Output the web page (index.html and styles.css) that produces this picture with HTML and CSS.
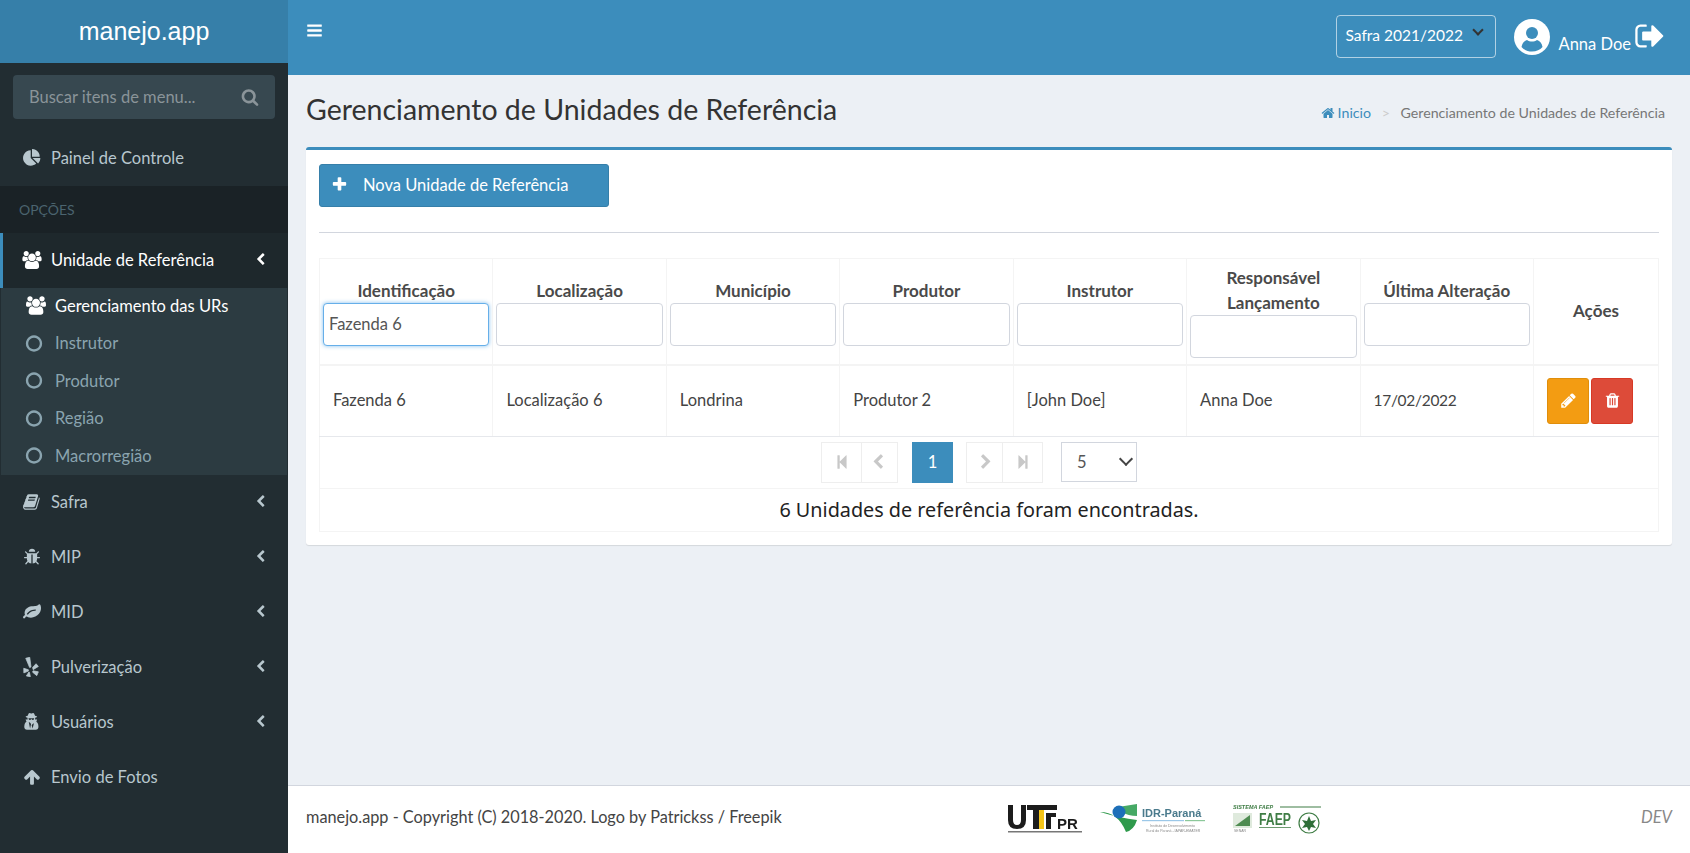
FILE: index.html
```html
<!DOCTYPE html>
<html>
<head>
    <meta charset="UTF-8">
    <title>manejo.app</title>
    <link rel="stylesheet" href="styles.css">
</head>
<body>
    <svg class="sprite" xmlns="http://www.w3.org/2000/svg">
        <symbol id="i-search" viewBox="0 0 1792 1792"><path d="M1216 832q0-185-131.5-316.5t-316.5-131.5-316.5 131.5-131.5 316.5 131.5 316.5 316.5 131.5 316.5-131.5 131.5-316.5zm512 832q0 52-38 90t-90 38q-54 0-90-38l-343-342q-179 124-399 124-143 0-273.5-55.5t-225-150-150-225-55.5-273.5 55.5-273.5 150-225 225-150 273.5-55.5 273.5 55.5 225 150 150 225 55.5 273.5q0 220-124 399l343 343q37 37 37 90z"/></symbol>
        <symbol id="i-pie" viewBox="0 0 1792 1792"><path d="M768 890l546 546q-106 108-247.5 168t-298.5 60q-209 0-385.5-103t-279.5-279.5-103-385.5 103-385.5 279.5-279.5 385.5-103v768zm187 6h773q0 157-60 298.5t-168 247.5zm709-128h-768v-768q209 0 385.5 103t279.5 279.5 103 385.5z"/></symbol>
        <symbol id="i-users" viewBox="0 0 1920 1792"><path d="M593 896q-162 5-265 128h-134q-82 0-138-40.5t-56-118.5q0-353 124-353 6 0 43.5 21t97.5 42.5 119 21.5q67 0 133-23-5 37-5 66 0 139 81 256zm1071 637q0 120-73 189.5t-194 69.5h-874q-121 0-194-69.5t-73-189.5q0-53 3.5-103.5t14-109 26.5-108.5 43-97.5 62-81 85.5-53.5 111.5-20q10 0 43 21.5t73 48 107 48 135 21.5 135-21.5 107-48 73-48 43-21.5q61 0 111.5 20t85.5 53.5 62 81 43 97.5 26.5 108.5 14 109 3.5 103.5zm-1024-1277q0 106-75 181t-181 75-181-75-75-181 75-181 181-75 181 75 75 181zm704 384q0 159-112.5 271.5t-271.5 112.5-271.5-112.5-112.5-271.5 112.5-271.5 271.5-112.5 271.5 112.5 112.5 271.5zm576 225q0 78-56 118.5t-138 40.5h-134q-103-123-265-128 81-117 81-256 0-29-5-66 66 23 133 23 59 0 119-21.5t97.5-42.5 43.5-21q124 0 124 353zm-128-609q0 106-75 181t-181 75-181-75-75-181 75-181 181-75 181 75 75 181z"/></symbol>
        <symbol id="i-chev-left" viewBox="0 0 1792 1792"><path d="M1427 301l-531 531 531 531q19 19 19 45t-19 45l-166 166q-19 19-45 19t-45-19l-742-742q-19-19-19-45t19-45l742-742q19-19 45-19t45 19l166 166q19 19 19 45t-19 45z"/></symbol>
        <symbol id="i-chev-right" viewBox="0 0 1792 1792"><path d="M1363 877l-742 742q-19 19-45 19t-45-19l-166-166q-19-19-19-45t19-45l531-531-531-531q-19-19-19-45t19-45l166-166q19-19 45-19t45 19l742 742q19 19 19 45t-19 45z"/></symbol>
        <symbol id="i-circle" viewBox="0 0 1792 1792"><path d="M896 352q-148 0-273 73t-198 198-73 273 73 273 198 198 273 73 273-73 198-198 73-273-73-273-198-198-273-73zm768 544q0 209-103 385.5t-279.5 279.5-385.5 103-385.5-103-279.5-279.5-103-385.5 103-385.5 279.5-279.5 385.5-103 385.5 103 279.5 279.5 103 385.5z"/></symbol>
        <symbol id="i-book" viewBox="0 0 1792 1792"><path d="M1639 478q40 57 18 129l-275 906q-19 64-76.5 107.5t-122.5 43.5h-923q-77 0-148.5-53.5t-99.5-131.5q-24-67-2-127 0-4 3-27t4-37q1-8-3-21.5t-3-19.5q2-11 8-21t16.5-23.5 16.5-23.5q23-38 45-91.5t30-91.5q3-10 .5-30t-.5-28q3-11 17-28t17-23q21-36 42-92t25-90q1-9-2.5-32t.5-28q4-13 22-30.5t22-22.5q19-26 42.5-84.5t27.5-96.5q1-8-3-25.5t-2-26.5q2-8 9-18t18-23 17-21q8-12 16.5-30.5t15-35 16-36 19.5-32 26.5-23.5 36-11.5 47.5 5.5l-1 3q38-9 51-9h761q74 0 114 56t18 130l-274 906q-36 119-71.5 153.5t-128.5 34.5h-869q-27 0-38 15-11 16-1 43 24 70 144 70h923q29 0 56-15.5t35-41.5l300-987q7-22 5-57 38 15 59 43zm-1064 2q-4 13 2 22.5t20 9.5h608q13 0 25.5-9.5t16.5-22.5l21-64q4-13-2-22.5t-20-9.5h-608q-13 0-25.5 9.5t-16.5 22.5zm-83 256q-4 13 2 22.5t20 9.5h608q13 0 25.5-9.5t16.5-22.5l21-64q4-13-2-22.5t-20-9.5h-608q-13 0-25.5 9.5t-16.5 22.5z"/></symbol>
        <symbol id="i-bug" viewBox="0 0 1792 1792"><path d="M1696 960q0 26-19 45t-45 19h-224q0 171-67 290l208 209q19 19 19 45t-19 45q-18 19-45 19t-45-19l-198-197q-5 5-15 13t-42 28.5-65 36.5-82 29-97 13v-896h-128v896q-51 0-101.5-13.5t-87-33-66-39-43.5-32.5l-15-14-183 207q-20 21-48 21-24 0-43-16-19-18-20.5-44.5t15.5-46.5l202-227q-58-114-58-274h-224q-26 0-45-19t-19-45 19-45 45-19h224v-294l-173-173q-19-19-19-45t19-45 45-19 45 19l173 173h844l173-173q19-19 45-19t45 19 19 45-19 45l-173 173v294h224q26 0 45 19t19 45zm-480-576h-640q0-133 93.5-226.5t226.5-93.5 226.5 93.5 93.5 226.5z"/></symbol>
        <symbol id="i-leaf" viewBox="0 0 1792 1792"><path d="M1280 704q0-26-19-45t-45-19q-172 0-318 49.5t-259.5 134-235.5 219.5q-19 21-19 45 0 26 19 45t45 19q24 0 45-19 27-24 74-71t67-66q137-124 268.5-176t313.5-52q26 0 45-19t19-45zm512-198q0 95-20 193-46 224-184.5 383t-357.5 268q-214 108-438 108-148 0-286-47-15-5-88-42t-96-37q-16 0-39.5 32t-45 70-52.5 70-60 32q-43 0-63.5-17.5t-45.5-59.5q-2-4-6-11t-5.5-10-3-9.5-1.500-13.500q0-35 31-73.500t68-65.500 68-56 31-48q0-4-14-38t-16-44q-9-51-9-104 0-115 43.500-220t119-184.500 170.500-139 204-95.500q55-18 145-25.500t179.500-9 178.500-6 163.500-24 113.500-56.500l29.500-29.500 29.500-28 27-20 36.500-16 43.500-4.500q39 0 70.500 46t47.500 112 24 124 8 96z"/></symbol>
        <symbol id="i-yelp" viewBox="0 0 15 19"><path stroke="currentColor" stroke-width=".7" stroke-linejoin="round" d="M2.500 1.200L6.300.3 7.500 9.500 6.200 10zM.6 10.700L5 12.100v1.300L.7 15.100zM9 9.900l3.300-3.500 2.200 2.600-5 3zM9.500 13.100l5 1-1.500 3.600-4-3.300zM6 14.500l.9 4.200-3.800-.7 2.400-3.800z"/></symbol>
        <symbol id="i-secret" viewBox="0 0 1536 1792"><path d="M576 1536l96-448-96-128-128-64zm256 0l128-512-128 64-96 128zm160-1010q-2-4-4-6-10-8-96-8-70 0-167 19-7 2-21 2t-21-2q-97-19-167-19-86 0-96 8-2 2-4 6 2 18 4 27 2 3 7.500 6.500t7.500 10.500q2 4 7.500 20.500t7 20.500 7.500 17 8.500 17 9 14 12 13.500 14 9.500 17.500 8 20.500 4 24.500 2q36 0 59-12.500t32.500-30 14.500-34.500 11.500-29.500 17.500-12.500h12q11 0 17.500 12.500t11.500 29.500 14.500 34.500 32.500 30 59 12.500q13 0 24.500-2t20.500-4 17.500-8 14-9.500 12-13.500 9-14 8.500-17 7.500-17 7-20.500 7.500-20.500q2-7 7.500-10.500t7.500-6.500q2-9 4-27zm416 879q0 121-73 190t-194 69h-874q-121 0-194-69t-73-190q0-61 4.500-118t19-125.500 37.500-123.500 63.500-103.500 93.500-74.500l-90-220h214q-22-64-22-128 0-12 2-32-194-40-194-96 0-57 210-99 17-62 51.500-134t70.500-114q32-37 76-37 30 0 84 31t84 31 84-31 84-31q44 0 76 36 36 42 70.500 114t51.500 134q210 42 210 99 0 56-194 96 7 81-20 160h214l-82 225q63 33 107.500 96.500t65.500 143.500 29 151.500 8 148.500z"/></symbol>
        <symbol id="i-arrow-up" viewBox="0 0 1792 1792"><path d="M1675 971q0 51-37 90l-75 75q-38 38-91 38-54 0-90-38l-294-293v704q0 52-37.5 84.5t-90.5 32.5h-128q-53 0-90.5-32.5t-37.5-84.5v-704l-294 293q-36 38-90 38t-90-38l-75-75q-38-38-38-90 0-53 38-91l651-651q35-37 90-37 54 0 91 37l651 651q37 39 37 91z"/></symbol>
        <symbol id="i-bars" viewBox="0 0 1792 1792"><path d="M1664 1344v128q0 26-19 45t-45 19h-1408q-26 0-45-19t-19-45v-128q0-26 19-45t45-19h1408q26 0 45 19t19 45zm0-512v128q0 26-19 45t-45 19h-1408q-26 0-45-19t-19-45v-128q0-26 19-45t45-19h1408q26 0 45 19t19 45zm0-512v128q0 26-19 45t-45 19h-1408q-26 0-45-19t-19-45v-128q0-26 19-45t45-19h1408q26 0 45 19t19 45z"/></symbol>
        <symbol id="i-signout" viewBox="0 0 1664 1792"><path d="M704 1440q0 4 1 20t.5 26.5-3 23.5-10 19.5-20.5 6.5h-320q-119 0-203.5-84.5t-84.5-203.5v-704q0-119 84.5-203.5t203.5-84.5h320q13 0 22.5 9.5t9.5 22.5q0 4 1 20t.5 26.5-3 23.5-10 19.5-20.5 6.5h-320q-66 0-113 47t-47 113v704q0 66 47 113t113 47h312l11.5 1 11.5 3 8 5.5 7 9 2 13.5zm928-544q0 26-19 45l-544 544q-19 19-45 19t-45-19-19-45v-288h-448q-26 0-45-19t-19-45v-384q0-26 19-45t45-19h448v-288q0-26 19-45t45-19 45 19l544 544q19 19 19 45z"/></symbol>
        <symbol id="i-home" viewBox="0 0 1792 1792"><path d="M1472 992v480q0 26-19 45t-45 19h-384v-384h-256v384h-384q-26 0-45-19t-19-45v-480q0-1 .5-3t.5-3l575-474 575 474q1 2 1 6zm223-69l-62 74q-8 9-21 11h-3q-13 0-21-7l-692-577-692 577q-12 8-24 7-13-2-21-11l-62-74q-8-10-7-23.5t11-21.5l719-599q32-26 76-26t76 26l244 204v-195q0-14 9-23t23-9h192q14 0 23 9t9 23v408l219 182q10 8 11 21.5t-7 23.5z"/></symbol>
        <symbol id="i-plus" viewBox="0 0 1792 1792"><path d="M1600 736v192q0 40-28 68t-68 28h-416v416q0 40-28 68t-68 28h-192q-40 0-68-28t-28-68v-416h-416q-40 0-68-28t-28-68v-192q0-40 28-68t68-28h416v-416q0-40 28-68t68-28h192q40 0 68 28t28 68v416h416q40 0 68 28t28 68z"/></symbol>
        <symbol id="i-pencil" viewBox="0 0 1792 1792"><path d="M491 1536l91-91-235-235-91 91v107h128v128h107zm523-928q0-22-22-22-10 0-17 7l-542 542q-7 7-7 17 0 22 22 22 10 0 17-7l542-542q7-7 7-17zm-54-192l416 416-832 832h-416v-416zm683 96q0 53-37 90l-166 166-416-416 166-165q36-38 90-38 53 0 91 38l235 234q37 39 37 91z"/></symbol>
        <symbol id="i-trash" viewBox="0 0 1792 1792"><path d="M704 1376v-704q0-14-9-23t-23-9h-64q-14 0-23 9t-9 23v704q0 14 9 23t23 9h64q14 0 23-9t9-23zm256 0v-704q0-14-9-23t-23-9h-64q-14 0-23 9t-9 23v704q0 14 9 23t23 9h64q14 0 23-9t9-23zm256 0v-704q0-14-9-23t-23-9h-64q-14 0-23 9t-9 23v704q0 14 9 23t23 9h64q14 0 23-9t9-23zm-544-992h448l-48-117q-7-9-17-11h-317q-10 2-17 11zm928 32v64q0 14-9 23t-23 9h-96v948q0 83-47 143.5t-113 60.5h-832q-66 0-113-58.5t-47-141.5v-952h-96q-14 0-23-9t-9-23v-64q0-14 9-23t23-9h309l70-167q15-37 54-63t79-26h320q40 0 79 26t54 63l70 167h309q14 0 23 9t9 23z"/></symbol>
        <symbol id="i-first" viewBox="0 0 1792 1792"><path d="M1363 141q19-19 32-13t13 32v1472q0 26-13 32t-32-13l-710-710q-9-9-13-19v678q0 26-19 45t-45 19h-128q-26 0-45-19t-19-45v-1408q0-26 19-45t45-19h128q26 0 45 19t19 45v678q4-10 13-19z"/></symbol>
        <symbol id="i-last" viewBox="0 0 1792 1792"><path d="M429 1651q-19 19-32 13t-13-32v-1472q0-26 13-32t32 13l710 710q9 9 13 19v-678q0-26 19-45t45-19h128q26 0 45 19t19 45v1408q0 26-19 45t-45 19h-128q-26 0-45-19t-19-45v-678q-4 10-13 19z"/></symbol>
    </svg>

    <div class="layout">
        <aside class="sidebar">
            <div class="logo">manejo.app</div>
            <div class="search">
                <span>Buscar itens de menu...</span>
                <svg class="ico search-ico"><use href="#i-search"/></svg>
            </div>
            <a class="menu-item"><svg class="ico"><use href="#i-pie"/></svg>Painel de Controle</a>
            <div class="menu-header">OPÇÕES</div>
            <a class="menu-item active"><svg class="ico"><use href="#i-users"/></svg>Unidade de Referência<svg class="chev"><use href="#i-chev-left"/></svg></a>
            <div class="submenu">
                <a class="sub-item current"><svg class="ico"><use href="#i-users"/></svg>Gerenciamento das URs</a>
                <a class="sub-item"><svg class="ico dot"><use href="#i-circle"/></svg>Instrutor</a>
                <a class="sub-item"><svg class="ico dot"><use href="#i-circle"/></svg>Produtor</a>
                <a class="sub-item"><svg class="ico dot"><use href="#i-circle"/></svg>Região</a>
                <a class="sub-item"><svg class="ico dot"><use href="#i-circle"/></svg>Macrorregião</a>
            </div>
            <a class="menu-item"><svg class="ico"><use href="#i-book"/></svg>Safra<svg class="chev"><use href="#i-chev-left"/></svg></a>
            <a class="menu-item"><svg class="ico"><use href="#i-bug"/></svg>MIP<svg class="chev"><use href="#i-chev-left"/></svg></a>
            <a class="menu-item"><svg class="ico"><use href="#i-leaf"/></svg>MID<svg class="chev"><use href="#i-chev-left"/></svg></a>
            <a class="menu-item"><svg class="ico big"><use href="#i-yelp"/></svg>Pulverização<svg class="chev"><use href="#i-chev-left"/></svg></a>
            <a class="menu-item"><svg class="ico"><use href="#i-secret"/></svg>Usuários<svg class="chev"><use href="#i-chev-left"/></svg></a>
            <a class="menu-item"><svg class="ico"><use href="#i-arrow-up"/></svg>Envio de Fotos</a>
        </aside>

        <div class="page">
            <header class="topbar">
                <svg class="bars"><use href="#i-bars"/></svg>
                <div class="topbar-right">
                    <div class="safra">Safra 2021/2022<span class="safra-arrow"></span></div>
                    <svg class="avatar" viewBox="0 0 36 36">
                        <circle cx="18" cy="18" r="18" fill="#fff"/>
                        <circle cx="18" cy="14" r="6" fill="#3c8dbc"/>
                        <path d="M7.500 28c.5-3.500 2.500-6 5.500-7 3 2 7 2 10 0 3 1 5 3.500 5.500 7-2.500 2.800-6 4.500-10.500 4.500s-8-1.700-10.500-4.500z" fill="#3c8dbc"/>
                    </svg>
                    <span class="user-name">Anna Doe</span>
                    <svg class="signout"><use href="#i-signout"/></svg>
                </div>
            </header>

            <main class="content">
                <div class="content-head">
                    <h1>Gerenciamento de Unidades de Referência</h1>
                    <div class="breadcrumb">
                        <a><svg class="home"><use href="#i-home"/></svg>Inicio</a>
                        <span class="sep">&gt;</span>
                        <span>Gerenciamento de Unidades de Referência</span>
                    </div>
                </div>

                <section class="box">
                    <button class="btn-new"><svg class="plus"><use href="#i-plus"/></svg>Nova Unidade de Referência</button>
                    <hr>
                    <table class="grid">
                        <thead>
                            <tr>
                                <th>Identificação<input class="focus" type="text" value="Fazenda 6"></th>
                                <th>Localização<input type="text"></th>
                                <th>Município<input type="text"></th>
                                <th>Produtor<input type="text"></th>
                                <th>Instrutor<input type="text"></th>
                                <th>Responsável Lançamento<input type="text"></th>
                                <th>Última Alteração<input type="text"></th>
                                <th>Ações</th>
                            </tr>
                        </thead>
                        <tbody>
                            <tr>
                                <td>Fazenda 6</td>
                                <td>Localização 6</td>
                                <td>Londrina</td>
                                <td>Produtor 2</td>
                                <td>[John Doe]</td>
                                <td>Anna Doe</td>
                                <td class="date">17/02/2022</td>
                                <td class="actions">
                                    <button class="btn-act warn"><svg><use href="#i-pencil"/></svg></button>
                                    <button class="btn-act danger"><svg><use href="#i-trash"/></svg></button>
                                </td>
                            </tr>
                        </tbody>
                        <tfoot>
                            <tr>
                                <td colspan="8" class="pager-cell">
                                    <div class="pager">
                                        <span class="pg w40"><svg><use href="#i-first"/></svg></span>
                                        <span class="pg w37 prev"><svg><use href="#i-chev-left"/></svg></span>
                                        <span class="pg-current">1</span>
                                        <span class="pg w37 next"><svg><use href="#i-chev-right"/></svg></span>
                                        <span class="pg w40"><svg><use href="#i-last"/></svg></span>
                                        <span class="page-size">5</span>
                                    </div>
                                </td>
                            </tr>
                            <tr>
                                <td colspan="8" class="total">6 Unidades de referência foram encontradas.</td>
                            </tr>
                        </tfoot>
                    </table>
                </section>
            </main>

            <footer class="footer">
                <span class="copy">manejo.app - Copyright (C) 2018-2020. Logo by Patrickss / Freepik</span>
                <div class="partners">
                    <svg class="partner logo-utf" width="74" height="30" viewBox="0 0 74 30">
                        <path d="M0 1h5v15q0 5 4 5t4-5V1h5v15q0 9-9 9T0 16z" fill="#1c1c1c"/>
                        <path d="M19 1h30v5H31v19h-6V6h-6z" fill="#1c1c1c"/>
                        <path d="M31 6h5v19h-5z" fill="#f5c518"/>
                        <path d="M38 9h10v4h-5v12h-5z" fill="#1c1c1c"/>
                        <text class="partner-pr" x="49" y="25">PR</text>
                        <rect y="27" width="74" height="1.500" fill="#777"/>
                    </svg>
                    <svg class="partner logo-idr" width="105" height="30" viewBox="0 0 105 30">
                        <path d="M0 8q18 0 26 20 8-2 11-12Q20 14 0 8z" fill="#2f9a4c"/>
                        <path d="M18 3l19-3v12q-9 0-15-4z" fill="#46a965"/>
                        <circle cx="19" cy="8" r="6.500" fill="#1d6fb8"/>
                        <text class="partner-idr" x="42" y="13">IDR-Paraná</text>
                        <rect x="42" y="16" width="42" height="1.200" fill="#9cc8e8"/>
                        <rect x="85" y="16" width="20" height="1.200" fill="#8cc89a"/>
                        <text class="partner-tiny" x="50" y="23">Instituto de Desenvolvimento</text>
                        <text class="partner-tiny" x="46" y="28">Rural do Paraná - IAPAR-EMATER</text>
                    </svg>
                    <svg class="partner logo-faep" width="90" height="30" viewBox="0 0 90 30">
                        <text class="partner-sis" x="0" y="4.500">SISTEMA FAEP</text>
                        <rect x="47" y="2.500" width="41" height="1" fill="#3f7d45"/>
                        <rect x="0" y="9" width="19" height="15" fill="#dfeadd"/>
                        <path d="M2 22L17 11v11z" fill="#4f8c52"/>
                        <text class="partner-tiny" x="1" y="28">SENAR</text>
                        <text class="partner-faep" x="26" y="21" textLength="32" lengthAdjust="spacingAndGlyphs">FAEP</text>
                        <rect x="26" y="23" width="32" height="1" fill="#6c9a6f"/>
                        <circle cx="76" cy="19" r="10" fill="#fff" stroke="#3f7d45" stroke-width="1.200"/>
                        <path d="M76 12l2 5 5-1-3 4 3 4-5-1-2 4-2-4-5 1 3-4-3-4 5 1z" fill="#2f6f38"/>
                    </svg>
                </div>
                <span class="dev">DEV</span>
            </footer>
        </div>
    </div>
</body>
</html>
```

FILE: styles.css
```css
*{
    box-sizing:border-box;
}
html,body{
    margin:0;
    height:100%;
    overflow:hidden;
}
body{
    font-family:"Lato","Liberation Sans",sans-serif;
    font-size:16.5px;
    color:#333;
    background:#ecf0f5;
}
.sprite{
    display:none;
}
svg{
    fill:currentColor;
}
.layout{
    display:grid;
    grid-template-columns:288px 1fr;
    height:853px;
}

/* sidebar */
.sidebar{
    background:#222d32;
    color:#b8c7ce;
}
.logo{
    height:63px;
    background:#367fa9;
    color:#fff;
    font-family:"Liberation Sans",sans-serif;
    font-size:25px;
    line-height:63px;
    text-align:center;
}
.search{
    height:44px;
    margin:12px 13px;
    padding:0 16px 1px;
    background:#374850;
    border-radius:4px;
    display:flex;
    align-items:center;
    justify-content:space-between;
    color:#8a9499;
}
.search-ico{
    width:18px;
    height:18px;
    margin:0;
    color:#8a9499;
}
.menu-item{
    height:55px;
    padding:0 0 2px 22px;
    display:flex;
    align-items:center;
}
.menu-item .ico{
    width:20px;
    height:18px;
    margin-right:9px;
    flex:none;
}
.menu-item .ico.big{
    height:20px;
    margin-left:-1px;
    margin-right:10px;
}
.chev{
    width:13px;
    height:13px;
    margin-left:auto;
    margin-right:21px;
}
.menu-header{
    height:47px;
    padding-left:19px;
    background:#1a2226;
    color:#4b646f;
    font-size:14px;
    line-height:47px;
}
.menu-item.active{
    background:#1e282c;
    color:#fff;
    padding-left:19px;
    border-left:3px solid #3c8dbc;
}
.submenu{
    height:187px;
    margin:0 1px;
    background:#2c3b41;
}
.sub-item{
    height:37.5px;
    padding:0 0 2px 25px;
    display:flex;
    align-items:center;
    color:#8aa4af;
}
.sub-item .ico{
    width:20px;
    height:19px;
    margin-right:9px;
}
.sub-item .ico.dot{
    margin-left:-2px;
    margin-right:11px;
}
.sub-item.current{
    color:#fff;
}

/* top bar */
.page{
    display:flex;
    flex-direction:column;
    min-width:0;
}
.topbar{
    height:75px;
    flex:none;
    background:#3c8dbc;
    color:#fff;
    display:flex;
    align-items:flex-start;
    justify-content:space-between;
    padding:0 26px 0 18px;
}
.bars{
    width:17px;
    height:17px;
    margin-top:22px;
}
.topbar-right{
    display:flex;
    align-items:flex-start;
}
.safra{
    width:160px;
    height:43px;
    margin-top:15px;
    padding-left:9px;
    border:1px solid rgba(255,255,255,.6);
    border-radius:4px;
    font-size:15.5px;
    line-height:38px;
    position:relative;
}
.safra-arrow{
    position:absolute;
    top:10px;
    right:13px;
    width:8px;
    height:8px;
    border-right:2px solid #333;
    border-bottom:2px solid #333;
    transform:rotate(45deg);
}
.avatar{
    width:36px;
    height:36px;
    margin:19px 9px 0 18px;
}
.user-name{
    margin-top:32px;
    line-height:24px;
}
.signout{
    width:30px;
    height:32px;
    margin:20px 0 0 3px;
}

/* content */
.content{
    flex:1;
    padding:0 18px;
}
.content-head{
    height:72px;
    display:flex;
    align-items:center;
    justify-content:space-between;
}
h1{
    margin:-4px 0 0;
    font-size:28.5px;
    font-weight:400;
}
.breadcrumb{
    font-size:14.2px;
    color:#777;
    margin:2px 7px 0 0;
}
.breadcrumb a{
    color:#3c8dbc;
}
.home{
    width:14px;
    height:14px;
    margin-right:3px;
    vertical-align:-2px;
}
.sep{
    color:#ccc;
    margin:0 7px;
}
.box{
    height:398px;
    padding:14px 13px;
    background:#fff;
    border-top:3px solid #3c8dbc;
    border-radius:3px;
    box-shadow:0 1px 1px rgba(0,0,0,.1);
}
.btn-new{
    width:290px;
    height:43px;
    padding:0 0 2px 11px;
    display:flex;
    align-items:center;
    background:#3c8dbc;
    border:1px solid #367fa9;
    border-radius:3px;
    color:#fff;
    font:inherit;
    text-align:left;
}
.plus{
    width:17px;
    height:17px;
    margin-right:15px;
}
hr{
    margin:25px 0;
    border:0;
    border-top:1px solid #d2d6de;
}
.grid{
    width:100%;
    table-layout:fixed;
    border-collapse:collapse;
}
.grid th,.grid td{
    border:1px solid #f4f4f4;
}
.grid th{
    padding:6px 3px;
    font-weight:700;
    font-size:17px;
    line-height:25px;
    color:#4a4a4a;
    vertical-align:middle;
    border-bottom-width:2px;
}
.grid th:last-child{
    width:125px;
    padding-bottom:9px;
}
.grid input{
    display:block;
    width:100%;
    height:43px;
    padding:0 5px;
    border:1px solid #d2d6de;
    border-radius:4px;
    font:inherit;
    font-size:16.5px;
    font-weight:400;
    color:#555;
    outline:0;
}
.grid input.focus{
    border-color:#66afe9;
    box-shadow:0 0 4px rgba(102,175,233,.8);
}
.grid tbody td{
    height:71px;
    padding:0 13px 2px;
    color:#444;
    border-bottom-color:#e6e8ec;
}
.grid tbody td.date{
    font-size:15.5px;
    letter-spacing:-.3px;
}
.grid tbody td.actions{
    padding-bottom:0;
    white-space:nowrap;
    font-size:0;
}
.btn-act{
    width:42px;
    height:46px;
    margin-right:2px;
    padding:0;
    border:1px solid;
    border-radius:3px;
    color:#fff;
}
.btn-act svg{
    width:17px;
    height:17px;
    vertical-align:middle;
}
.warn{
    background:#f39c12;
    border-color:#e08e0b;
}
.danger{
    background:#dd4b39;
    border-color:#d73925;
}
.pager-cell{
    height:52px;
    padding:0 19px 0 0;
}
.pager{
    display:flex;
    justify-content:center;
    align-items:center;
}
.pg{
    height:41px;
    display:flex;
    align-items:center;
    justify-content:center;
    border:1px solid #eee;
    color:#c8c8c8;
    margin-left:-1px;
}
.pg svg{
    width:16px;
    height:16px;
}
.prev svg{
    margin-right:3px;
}
.next svg{
    margin-left:3px;
}
.w40{
    width:41px;
}
.w37{
    width:37px;
}
.pg-current{
    width:41px;
    height:41px;
    margin:0 14px;
    background:#3c8dbc;
    color:#fff;
    text-align:center;
    line-height:41px;
}
.page-size{
    width:76px;
    height:40px;
    margin-left:18px;
    padding-left:15px;
    border:1px solid #d2d6de;
    color:#555;
    line-height:38px;
    position:relative;
}
.page-size::after{
    content:"";
    position:absolute;
    top:11px;
    right:5px;
    width:8px;
    height:8px;
    border-right:2px solid #444;
    border-bottom:2px solid #444;
    transform:rotate(45deg);
}
.total{
    height:43px;
    text-align:center;
    font-family:"Noto Sans","Liberation Sans",sans-serif;
    font-size:19.8px;
    color:#222;
}

/* footer */
.footer{
    height:68px;
    flex:none;
    padding:0 18px 6px;
    background:#fff;
    border-top:1px solid #d2d6de;
    display:flex;
    align-items:center;
    position:relative;
}
.copy{
    color:#444;
    font-size:16.3px;
}
.partners{
    position:absolute;
    left:720px;
    top:18px;
    display:flex;
}
.partner{
    filter:blur(.3px);
}
.logo-idr{
    margin-left:18px;
}
.logo-faep{
    margin-left:28px;
}
.partner text{
    font-family:"Liberation Sans",sans-serif;
}
.partner-pr{
    font-size:15px;
    font-weight:700;
    fill:#1c1c1c;
}
.partner-idr{
    font-size:11px;
    font-weight:700;
    fill:#4a7a8c;
}
.partner-tiny{
    font-size:3.500px;
    fill:#888;
}
.partner-sis{
    font-size:5.500px;
    font-weight:700;
    font-style:italic;
    fill:#3f7d45;
}
.partner-faep{
    font-size:16px;
    font-weight:700;
    fill:#3f7d45;
}
.dev{
    margin-left:auto;
    font-style:italic;
    color:#888;
}
```
